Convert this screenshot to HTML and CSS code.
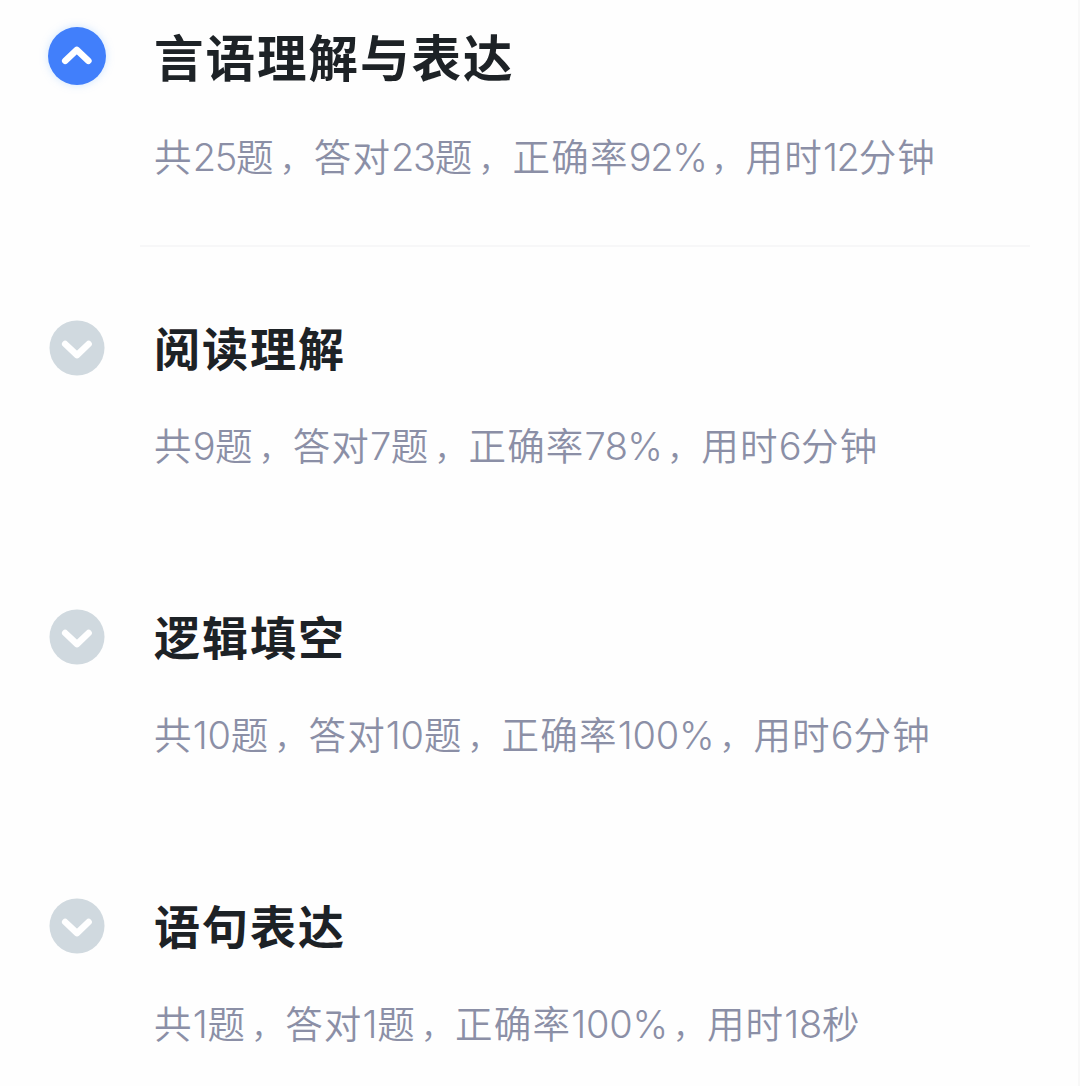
FILE: index.html
```html
<!DOCTYPE html>
<html lang="zh-CN">
<head>
<meta charset="utf-8">
<title>言语理解与表达</title>
<link rel="stylesheet" href="styles.css">
</head>
<body>
<main class="report">
  <section class="row row-main">
    <svg class="toggle toggle-open" viewBox="0 0 60 60"><circle cx="30" cy="30" r="29"/><path d="M18.2 34.8 29.8 23.8 41.4 34.8"/></svg>
    <div class="content">
      <h1 class="title title-main">言语理解与表达</h1>
      <p class="stats stats-tight">共<span class="num">25</span>题<span class="comma">，</span>答对<span class="num">23</span>题<span class="comma">，</span>正确率<span class="num">92%</span><span class="comma">，</span>用时<span class="num">12</span>分钟</p>
    </div>
  </section>
  <section class="row">
    <svg class="toggle" viewBox="0 0 60 60"><circle cx="30" cy="30" r="27.5"/><path d="M18.2 26 30 37.2 41.6 26"/></svg>
    <div class="content">
      <h2 class="title">阅读理解</h2>
      <p class="stats">共<span class="num">9</span>题<span class="comma">，</span>答对<span class="num">7</span>题<span class="comma">，</span>正确率<span class="num">78%</span><span class="comma">，</span>用时<span class="num">6</span>分钟</p>
    </div>
  </section>
  <section class="row">
    <svg class="toggle" viewBox="0 0 60 60"><circle cx="30" cy="30" r="27.5"/><path d="M18.2 26 30 37.2 41.6 26"/></svg>
    <div class="content">
      <h2 class="title">逻辑填空</h2>
      <p class="stats stats-loose">共<span class="num">10</span>题<span class="comma">，</span>答对<span class="num">10</span>题<span class="comma">，</span>正确率<span class="num">100%</span><span class="comma">，</span>用时<span class="num">6</span>分钟</p>
    </div>
  </section>
  <section class="row">
    <svg class="toggle" viewBox="0 0 60 60"><circle cx="30" cy="30" r="27.5"/><path d="M18.2 26 30 37.2 41.6 26"/></svg>
    <div class="content">
      <h2 class="title">语句表达</h2>
      <p class="stats stats-loose">共<span class="num">1</span>题<span class="comma">，</span>答对<span class="num">1</span>题<span class="comma">，</span>正确率<span class="num">100%</span><span class="comma">，</span>用时<span class="num">18</span>秒</p>
    </div>
  </section>
</main>
</body>
</html>
```

FILE: styles.css
```css
* { box-sizing: border-box; }
body {
  margin: 0;
  background: #fefefe;
  font-family: "Noto Sans CJK SC", sans-serif;
}
.report {
  height: 1086px;
  overflow: hidden;
  border-right: 2px solid #f8f8f8;
}
.row {
  display: flex;
  height: 289px;
  padding: 69px 0 0 47px;
}
.row-main {
  height: 247px;
  padding-top: 26px;
}
.toggle {
  flex: none;
  width: 60px;
  height: 60px;
  margin-top: 2px;
  fill: #d0d9df;
  overflow: visible;
}
.toggle path {
  fill: none;
  stroke: #fff;
  stroke-width: 6.5;
  stroke-linecap: round;
  stroke-linejoin: round;
}
.toggle-open {
  margin-top: 0;
  fill: #417ffb;
  filter: drop-shadow(0 0 4px rgba(65, 150, 255, 0.25));
}
.content {
  width: 890px;
  margin-left: 33px;
  padding-left: 14px;
}
.row-main .content {
  height: 221px;
  border-bottom: 2px solid #f7f7f8;
}
.title {
  margin: 0;
  font-size: 46px;
  font-weight: 700;
  line-height: 60px;
  letter-spacing: 2px;
  color: #1d2226;
}
.title-main {
  font-size: 49.5px;
  letter-spacing: 2px;
}
.stats {
  margin: 40px 0 0;
  font-size: 37.5px;
  font-weight: 350;
  line-height: 56px;
  letter-spacing: 1.2px;
  white-space: nowrap;
  color: #8b8fa6;
}
.row-main .stats {
  margin-top: 41px;
}
.num {
  font-family: "Inter", sans-serif;
  font-size: 38px;
  letter-spacing: -0.6px;
}
.stats-tight .num { letter-spacing: -1.3px; }
.stats-loose .num { letter-spacing: -0.2px; }
.comma {
  display: inline-block;
  width: 39px;
  padding-left: 5px;
  font-size: 32px;
  line-height: 40px;
}
```
